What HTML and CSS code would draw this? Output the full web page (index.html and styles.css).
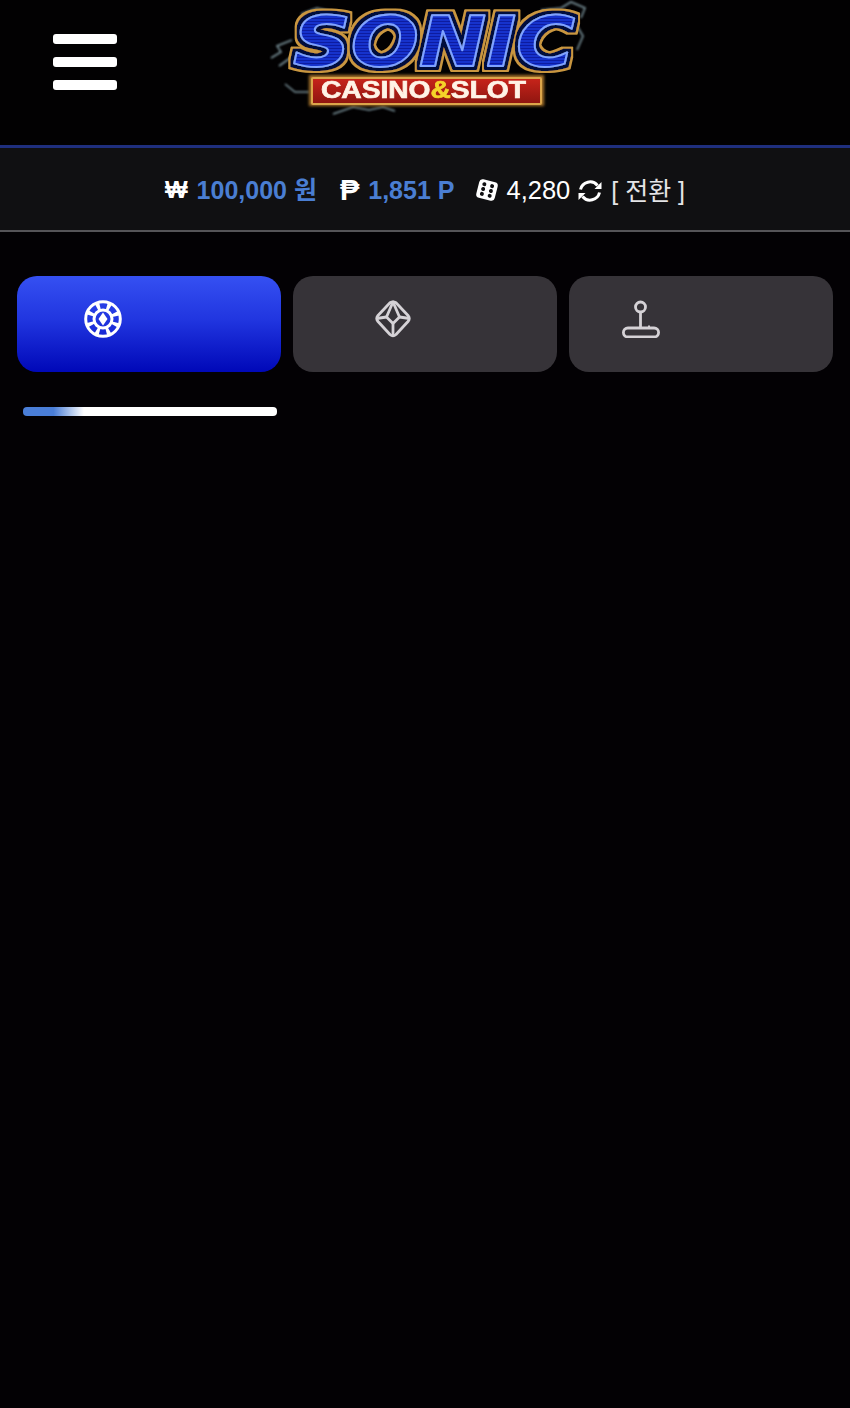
FILE: index.html
```html
<!DOCTYPE html>
<html lang="ko">
<head>
    <meta charset="UTF-8">
    <meta name="viewport" content="width=device-width, initial-scale=1.0">
    <title>Sonic Casino &amp; Slot</title>
    <link rel="stylesheet" href="styles.css">
</head>
<body>
    <header class="top-bar">
        <button class="menu-btn" aria-label="menu">
            <span></span>
            <span></span>
            <span></span>
        </button>

        <a class="logo" href="#">
            <svg width="330" height="120" viewBox="0 0 330 120">
                <defs>
                    <!-- scanlines across the letters -->
                    <pattern id="sonicLines" width="4" height="3" patternUnits="userSpaceOnUse">
                        <rect width="4" height="3" fill="#1233cc"/>
                        <rect width="4" height="1" fill="#0a1fa0"/>
                    </pattern>
                    <linearGradient id="plaqueFill" x1="0" y1="0" x2="0" y2="1">
                        <stop offset="0" stop-color="#c8241a"/>
                        <stop offset="1" stop-color="#8e1510"/>
                    </linearGradient>
                    <filter id="sonicEdge" x="-10%" y="-20%" width="120%" height="140%">
                        <feMorphology in="SourceAlpha" operator="dilate" radius="4.5" result="wide"/>
                        <feFlood flood-color="#c9963f"/>
                        <feComposite in2="wide" operator="in" result="gold"/>
                        <feMorphology in="SourceAlpha" operator="dilate" radius="3" result="mid"/>
                        <feFlood flood-color="#050c3c"/>
                        <feComposite in2="mid" operator="in" result="navy"/>
                        <feMerge>
                            <feMergeNode in="gold"/>
                            <feMergeNode in="navy"/>
                            <feMergeNode in="SourceGraphic"/>
                        </feMerge>
                    </filter>
                    <filter id="boltGlow" x="-10%" y="-10%" width="120%" height="120%">
                        <feGaussianBlur stdDeviation="0.8"/>
                    </filter>
                    <filter id="plaqueGlow" x="-10%" y="-30%" width="120%" height="160%">
                        <feGaussianBlur stdDeviation="1.5"/>
                    </filter>
                </defs>

                <!-- lightning around the wordmark -->
                <g class="bolts" filter="url(#boltGlow)">
                    <path d="M6 58 L16 52 L12 46 L27 40"/>
                    <path d="M14 66 L28 56"/>
                    <path d="M20 84 L30 92 L44 92"/>
                    <path d="M68 114 L88 107 L104 110 L118 107 L130 111"/>
                    <path d="M36 14 L52 8 L70 12"/>
                    <path d="M276 10 L296 8 L306 2 L320 8 L316 18"/>
                    <path d="M312 26 L318 36 L312 50"/>
                </g>

                <text class="sonic-word" x="28" y="66" textLength="282" lengthAdjust="spacingAndGlyphs" filter="url(#sonicEdge)">SONIC</text>

                <rect class="plaque-glow" x="44" y="75" width="235" height="31" filter="url(#plaqueGlow)"/>
                <rect class="plaque" x="47" y="78" width="229" height="26" rx="1"/>
                <text class="plaque-text" x="56" y="98" textLength="205" lengthAdjust="spacingAndGlyphs">CASINO<tspan class="amp">&amp;</tspan>SLOT</text>
            </svg>
        </a>
    </header>

    <!-- balance strip -->
    <section class="balance-bar">
        <span class="cur">₩</span>
        <span class="amount amount-money">100,000 원</span>

        <span class="cur cur-point">₱</span>
        <span class="amount amount-point">1,851 P</span>

        <svg class="dice" width="24" height="24" viewBox="0 0 24 24">
            <g transform="rotate(14 12 12)">
                <rect x="2.5" y="2.5" width="19" height="19" rx="3.5" fill="#fff"/>
                <g fill="#101012">
                    <circle cx="8" cy="7" r="2"/>
                    <circle cx="16" cy="7" r="2"/>
                    <circle cx="8" cy="12" r="2"/>
                    <circle cx="16" cy="12" r="2"/>
                    <circle cx="8" cy="17" r="2"/>
                    <circle cx="16" cy="17" r="2"/>
                </g>
            </g>
        </svg>
        <span class="chips">4,280</span>

        <svg class="refresh" width="24" height="24" viewBox="0 0 24 24" fill="none" stroke="#fff" stroke-width="3">
            <path d="M2.5 10.5 A9.7 9.7 0 0 1 19.5 6.5"/>
            <path d="M21.5 13.5 A9.7 9.7 0 0 1 4.5 17.5"/>
            <path d="M23.5 3 V10 H16.5 Z" fill="#fff" stroke="none"/>
            <path d="M0.5 21 V14 H7.5 Z" fill="#fff" stroke="none"/>
        </svg>
        <span class="switch">[ 전환 ]</span>
    </section>

    <nav class="tabs">
        <a class="tab tab-casino active" href="#">
            <svg width="38" height="38" viewBox="0 0 38 38" fill="none" stroke="#fff" stroke-width="3">
                <circle cx="19" cy="19" r="17.3"/>
                <circle cx="19" cy="19" r="9"/>
                <circle cx="19" cy="19" r="13" stroke-width="7" stroke-dasharray="3.4 6.81" stroke-dashoffset="-3.4"/>
                <path d="M19 12.5 L23.5 19 L19 25.5 L14.5 19 Z" fill="#fff" stroke="none"/>
            </svg>
        </a>
        <a class="tab tab-slot" href="#">
            <svg width="36" height="38" viewBox="0 0 36 38" fill="none" stroke="#d5d2d6" stroke-width="2.8" stroke-linejoin="round">
                <path d="M15 2.8 Q18 1 21 2.8 L33 15.5 Q35.5 18.5 33 21.5 L21 34.5 Q18 37 15 34.5 L3 21.5 Q0.5 18.5 3 15.5 Z"/>
                <path d="M18 2 L11.5 17 L18 23.5 L24.5 17 Z"/>
                <path d="M1.5 18.5 L11.5 17"/>
                <path d="M34.5 18.5 L24.5 17"/>
                <path d="M18 23.5 V36"/>
            </svg>
        </a>
        <a class="tab tab-game" href="#">
            <svg width="38" height="38" viewBox="0 0 38 38" fill="none" stroke="#d5d2d6" stroke-width="2.8">
                <circle cx="18.5" cy="7" r="5"/>
                <path d="M18.5 12 V28"/>
                <rect x="1.4" y="28" width="35.2" height="9" rx="4.5"/>
                <path d="M27 28 V25.5" stroke-width="2"/>
            </svg>
        </a>
    </nav>

    <div class="progress"></div>
</body>
</html>
```

FILE: styles.css
```css
/* General */
body {
    margin: 0;
    background-color: #030104;
    color: #fff;
    font-family: 'Liberation Sans', 'Noto Sans CJK KR', sans-serif;
}

/* Header */
.top-bar {
    display: flex;
    height: 145px;
    background-color: #020102;
    border-bottom: 3px solid #1f2f7e;
}

.menu-btn {
    display: flex;
    flex-direction: column;
    gap: 13px;
    width: 64px;
    height: 56px;
    margin: 34px 0 0 53px;
    padding: 0;
    border: none;
    background: none;
}

.menu-btn span {
    display: block;
    width: 64px;
    height: 10px;
    border-radius: 3px;
    background-color: #fff;
}

.logo {
    display: block;
    height: 120px;
    margin-left: 148px;
}

.logo svg {
    display: block;
}

.bolts path {
    fill: none;
    stroke: #a8cbd4;
    stroke-width: 1.6;
    opacity: 0.75;
}

.sonic-word {
    font-family: 'DejaVu Sans', sans-serif;
    font-size: 70px;
    font-weight: bold;
    font-style: italic;
    fill: url(#sonicLines);
    stroke: #7fa2ff;
    stroke-width: 1.8px;
    stroke-linejoin: round;
}

.plaque {
    fill: url(#plaqueFill);
    stroke: #dca54a;
    stroke-width: 2;
}

.plaque-glow {
    fill: #a8742a;
}

.plaque-text {
    font-family: 'Liberation Sans', sans-serif;
    font-size: 23px;
    font-weight: bold;
    fill: #fff3e6;
    stroke: #fff3e6;
    stroke-width: 0.7px;
}

.amp {
    fill: #f5d42a;
    stroke: #f5d42a;
}

/* Balance strip */
.balance-bar {
    display: flex;
    justify-content: center;
    align-items: center;
    height: 84px;
    box-sizing: border-box;
    padding-top: 1px;
    background-color: #101012;
    border-bottom: 2px solid #555458;
    font-size: 24px;
    line-height: 28px;
}

.cur {
    font-weight: bold;
    margin-right: 9px;
}

.cur-point {
    font-size: 29px;
    margin-right: 9px;
}

.amount {
    color: #4a7ed2;
    font-size: 25px;
    font-weight: bold;
    margin-right: 23px;
}

.amount-point {
    margin-right: 21px;
}

.dice {
    margin-right: 7px;
}

.chips {
    font-size: 25.5px;
    margin-right: 8px;
}

.refresh {
    margin: 2px 9px 0 0;
}

.switch {
    font-size: 25px;
    color: #e4e4e6;
    margin-top: 2px;
}

/* Category tabs */
.tabs {
    display: grid;
    grid-template-columns: repeat(3, 1fr);
    gap: 12px;
    padding: 44px 17px 0;
}

.tab {
    display: block;
    height: 96px;
    box-sizing: border-box;
    padding-top: 24px;
    border-radius: 20px;
    background-color: #363338;
}

.tab svg {
    display: block;
}

.tab.active {
    background: linear-gradient(180deg, #3550f2 0%, #2136e0 45%, #0008b8 100%);
}

.tab-casino {
    padding-left: 67px;
}

.tab-slot {
    padding-left: 82px;
}

.tab-game {
    padding-left: 53px;
}

.progress {
    width: 254px;
    height: 9px;
    margin: 35px 0 0 23px;
    border-radius: 4px;
    background: linear-gradient(90deg, #4a7ed8 0%, #4a7ed8 12%, #fff 24%, #fff 100%);
}
```
